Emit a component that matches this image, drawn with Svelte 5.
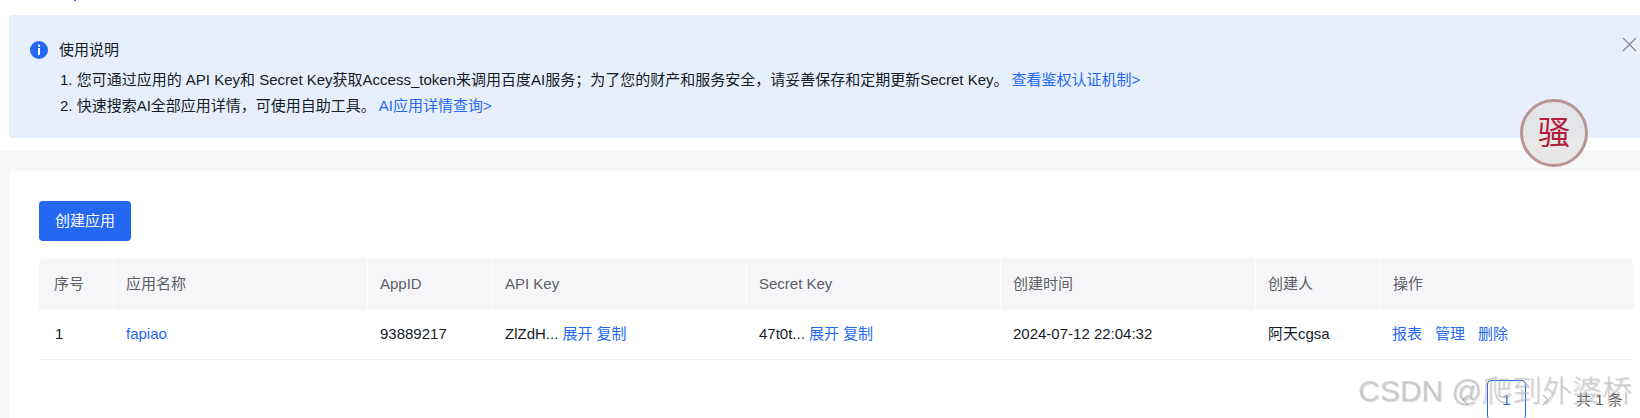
<script>
  const columns = [
    { name: '序号', width: 74 },
    { name: '应用名称', width: 254 },
    { name: 'AppID', width: 125 },
    { name: 'API Key', width: 254 },
    { name: 'Secret Key', width: 254 },
    { name: '创建时间', width: 255 },
    { name: '创建人', width: 125 },
    { name: '操作', width: 254 }
  ];
</script>

<div class="page">
  <div class="top"><span class="speck"></span></div>

  <section class="notice">
    <button class="close" aria-label="关闭">
      <svg width="15" height="15" viewBox="0 0 15 15"><path d="M1 1l13 13M14 1L1 14" /></svg>
    </button>
    <div class="title">
      <svg class="info" width="18" height="18" viewBox="0 0 18 18">
        <circle cx="9" cy="9" r="9" fill="#2468f2" />
        <rect x="8" y="3.6" width="2" height="2.2" fill="#fff" />
        <rect x="8" y="7" width="2" height="7" fill="#fff" />
      </svg>
      <span>使用说明</span>
    </div>
    <p>1. 您可通过应用的 API Key和 Secret Key获取Access_token来调用百度AI服务；为了您的财产和服务安全，请妥善保存和定期更新Secret Key。<a href="#a">查看鉴权认证机制&gt;</a></p>
    <p>2. 快速搜索AI全部应用详情，可使用自助工具。<a href="#b">AI应用详情查询&gt;</a></p>
  </section>

  <main class="band">
    <section class="card">
      <button class="create">创建应用</button>
      <table>
        <colgroup>
          {#each columns as c}<col style="width:{c.width}px" />{/each}
        </colgroup>
        <thead>
          <tr>{#each columns as c}<th>{c.name}</th>{/each}</tr>
        </thead>
        <tbody>
          <tr>
            <td>1</td>
            <td><a href="#c">fapiao</a></td>
            <td>93889217</td>
            <td>ZlZdH... <a class="act" href="#d">展开</a><a class="act" href="#e">复制</a></td>
            <td>47t0t... <a class="act" href="#f">展开</a><a class="act" href="#g">复制</a></td>
            <td>2024-07-12 22:04:32</td>
            <td>阿天cgsa</td>
            <td class="ops"><a href="#h">报表</a><a href="#i">管理</a><a href="#j">删除</a></td>
          </tr>
        </tbody>
      </table>
      <div class="pager">
        <svg class="chev" width="7" height="12" viewBox="0 0 7 12"><path d="M6 1L1 6l5 5" /></svg>
        <span class="cur">1</span>
        <svg class="chev next" width="7" height="12" viewBox="0 0 7 12"><path d="M1 1l5 5-5 5" /></svg>
        <span class="total">共 1 条</span>
      </div>
    </section>
  </main>

  <div class="avatar">骚</div>
  <div class="mark">CSDN @爬到外婆桥</div>
</div>

<style>
  :global(body) { margin: 0; background: #fff; }
  .page {
    position: relative;
    height: 418px;
    overflow: hidden;
    font: 15px/26px "Liberation Sans", "Noto Sans CJK SC", sans-serif;
    color: #151b26;
  }
  a { color: #2468f2; text-decoration: none; }
  .top { height: 15px; padding-left: 74px; }
  .speck { display: block; width: 2px; height: 1px; background: #2468f2; }

  .notice {
    position: relative;
    box-sizing: border-box;
    height: 123px;
    margin-left: 9px;
    padding: 22px 0 0 51px;
    background: #e7effc;
    border-radius: 4px 0 0 4px;
  }
  .notice p { margin: 0; }
  .notice p a { margin-left: 3px; }
  .title { display: flex; align-items: center; height: 26px; margin: 0 0 4px; }
  .info { margin-left: -30px; margin-right: 11px; flex: none; }
  .close {
    position: absolute;
    top: 22px;
    right: 3px;
    padding: 0;
    border: 0;
    background: none;
    line-height: 0;
  }
  .close path { stroke: #84868c; stroke-width: 1.2; fill: none; }

  .band {
    height: 267px;
    margin-top: 13px;
    padding: 20px 0 0 9px;
    background: #f6f7f9;
  }
  .card {
    height: 100%;
    box-sizing: border-box;
    padding: 30px 6px 0 30px;
    background: #fff;
    border-radius: 4px 0 0 0;
  }
  .create {
    display: block;
    width: 92px;
    height: 40px;
    padding: 0;
    border: 0;
    border-radius: 4px;
    background: #2468f2;
    color: #fff;
    font: inherit;
  }
  table {
    width: 1595px;
    margin-top: 18px;
    border-collapse: separate;
    border-spacing: 0;
    table-layout: fixed;
  }
  th {
    height: 50px;
    padding: 0 0 0 12px;
    box-sizing: border-box;
    background: #f6f6f8;
    border-left: 1px solid #fff;
    color: #5c5f66;
    font-weight: 400;
    text-align: left;
  }
  th:first-child { border-left: 0; border-radius: 6px 0 0 0; padding-left: 15px; }
  th:last-child { border-radius: 0 6px 0 0; }
  td {
    height: 51px;
    padding: 0 0 0 13px;
    box-sizing: border-box;
    border-bottom: 1px solid #eeeff1;
    white-space: nowrap;
  }
  td:first-child { padding-left: 16px; }
  td.ops { padding-left: 12px; }
  .act { margin-left: 4px; }
  .act:first-of-type { margin-left: 0; }
  .ops a { margin-right: 13px; }

  .pager {
    display: flex;
    align-items: center;
    height: 40px;
    margin-top: 20px;
    margin-right: -6px;
  }
  .chev { flex: none; margin: 0 18px 0 1423px; }
  .chev path { fill: none; stroke: #b8bac0; stroke-width: 1.2; }
  .cur {
    flex: none;
    box-sizing: border-box;
    width: 39px;
    height: 40px;
    border: 1px solid #2468f2;
    border-radius: 4px;
    color: #2468f2;
    text-align: center;
    line-height: 38px;
  }
  .next { margin: 0 0 0 16px; }
  .total { flex: none; margin-left: 27px; color: #5c5f66; white-space: nowrap; }

  .avatar {
    position: absolute;
    left: 1520px;
    top: 99px;
    width: 68px;
    height: 68px;
    box-sizing: border-box;
    border: 3px solid #bb9595;
    border-radius: 50%;
    background: rgba(226, 226, 226, 0.8);
    color: #b01c3a;
    font-size: 32px;
    line-height: 62px;
    text-align: center;
  }
  .mark {
    position: absolute;
    left: 1358px;
    top: 372px;
    color: rgba(190, 190, 190, 0.6);
    font-size: 30px;
    font-weight: 300;
    line-height: 38px;
    text-shadow: 1px 1px 1px rgba(120, 120, 120, 0.3);
    white-space: nowrap;
  }
</style>
